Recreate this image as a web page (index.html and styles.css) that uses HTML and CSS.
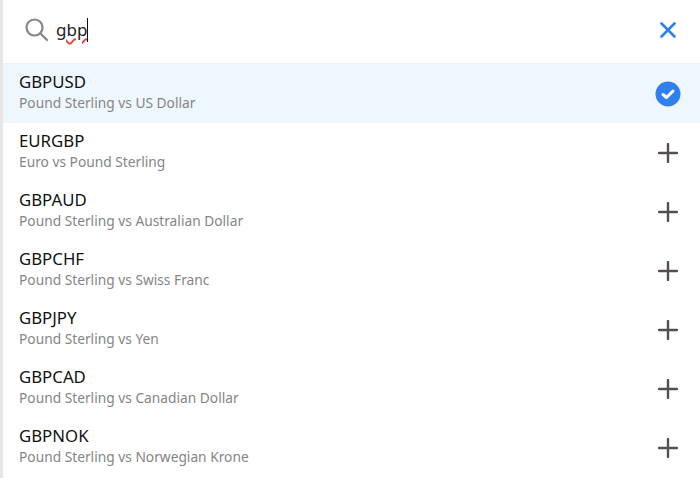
FILE: index.html
```html
<!DOCTYPE html>
<html lang="en">
<head>
    <meta charset="UTF-8">
    <meta name="viewport" content="width=device-width, initial-scale=1.0">
    <title>Symbol search</title>
    <link rel="stylesheet" href="styles.css">
</head>
<body>
    <div class="panel">
        <div class="search-bar">
            <svg class="search-icon" width="24" height="24" viewBox="0 0 24 24">
                <circle cx="9.5" cy="9.5" r="8" />
                <line x1="15.5" y1="15.5" x2="22" y2="22" />
            </svg>
            <div class="query"><span class="typed">gbp</span><span class="caret"></span></div>
            <svg class="close-icon" width="16" height="16" viewBox="0 0 16 16">
                <line x1="1.5" y1="1.5" x2="14.5" y2="14.5" />
                <line x1="14.5" y1="1.5" x2="1.5" y2="14.5" />
            </svg>
        </div>

        <div class="row selected">
            <div class="info">
                <div class="symbol">GBPUSD</div>
                <div class="name">Pound Sterling vs US Dollar</div>
            </div>
            <svg class="check-icon" width="26" height="26" viewBox="0 0 26 26">
                <circle cx="13" cy="13" r="12.5" />
                <path d="M8 13.5 L11.5 16.5 L18 10" />
            </svg>
        </div>
        <div class="row">
            <div class="info">
                <div class="symbol">EURGBP</div>
                <div class="name">Euro vs Pound Sterling</div>
            </div>
            <svg class="plus-icon" width="20" height="20" viewBox="0 0 20 20"><path d="M10 1 V19 M1 10 H19" /></svg>
        </div>
        <div class="row">
            <div class="info">
                <div class="symbol">GBPAUD</div>
                <div class="name">Pound Sterling vs Australian Dollar</div>
            </div>
            <svg class="plus-icon" width="20" height="20" viewBox="0 0 20 20"><path d="M10 1 V19 M1 10 H19" /></svg>
        </div>
        <div class="row">
            <div class="info">
                <div class="symbol">GBPCHF</div>
                <div class="name">Pound Sterling vs Swiss Franc</div>
            </div>
            <svg class="plus-icon" width="20" height="20" viewBox="0 0 20 20"><path d="M10 1 V19 M1 10 H19" /></svg>
        </div>
        <div class="row">
            <div class="info">
                <div class="symbol">GBPJPY</div>
                <div class="name">Pound Sterling vs Yen</div>
            </div>
            <svg class="plus-icon" width="20" height="20" viewBox="0 0 20 20"><path d="M10 1 V19 M1 10 H19" /></svg>
        </div>
        <div class="row">
            <div class="info">
                <div class="symbol">GBPCAD</div>
                <div class="name">Pound Sterling vs Canadian Dollar</div>
            </div>
            <svg class="plus-icon" width="20" height="20" viewBox="0 0 20 20"><path d="M10 1 V19 M1 10 H19" /></svg>
        </div>
        <div class="row">
            <div class="info">
                <div class="symbol">GBPNOK</div>
                <div class="name">Pound Sterling vs Norwegian Krone</div>
            </div>
            <svg class="plus-icon" width="20" height="20" viewBox="0 0 20 20"><path d="M10 1 V19 M1 10 H19" /></svg>
        </div>
    </div>
</body>
</html>
```

FILE: styles.css
```css
* {
    margin: 0;
    padding: 0;
    box-sizing: border-box;
}

body {
    font-family: 'Noto Sans', sans-serif;
    background-color: #ffffff;
    height: 478px;
    overflow: hidden;
}

.panel {
    border-left: 3px solid #e6e6e6;
    height: 478px;
    background-color: #ffffff;
}

.search-bar {
    display: flex;
    align-items: center;
    height: 64px;
    padding: 0 24px 4px 22px;
    border-bottom: 1px solid #edf0f2;
}

.search-icon {
    fill: none;
    stroke: #868686;
    stroke-width: 2.2;
    stroke-linecap: round;
}

.query {
    flex: 1;
    display: flex;
    align-items: center;
    margin-left: 7px;
    font-size: 17px;
    color: #222222;
}

.typed {
    text-decoration: underline wavy #e2453c 1.5px;
    text-underline-offset: 2px;
}

.caret {
    width: 1px;
    height: 24px;
    background-color: #111111;
}

.close-icon {
    stroke: #2f80ed;
    stroke-width: 2.6;
    stroke-linecap: round;
}

.row {
    display: flex;
    align-items: center;
    justify-content: space-between;
    height: 59px;
    padding: 0 22px 0 16px;
}

.row.selected {
    padding-right: 19px;
    background-color: #eef7fe;
}

.info {
    margin-bottom: 4px;
}

.symbol {
    font-size: 16.8px;
    line-height: 23px;
    color: #111111;
}

.name {
    font-size: 13.75px;
    line-height: 20px;
    color: #858585;
}

.check-icon circle {
    fill: #2f80ed;
}

.check-icon path {
    fill: none;
    stroke: #ffffff;
    stroke-width: 3;
    stroke-linecap: round;
    stroke-linejoin: round;
}

.plus-icon {
    fill: none;
    stroke: #55504e;
    stroke-width: 2.4;
    stroke-linecap: round;
}
```
